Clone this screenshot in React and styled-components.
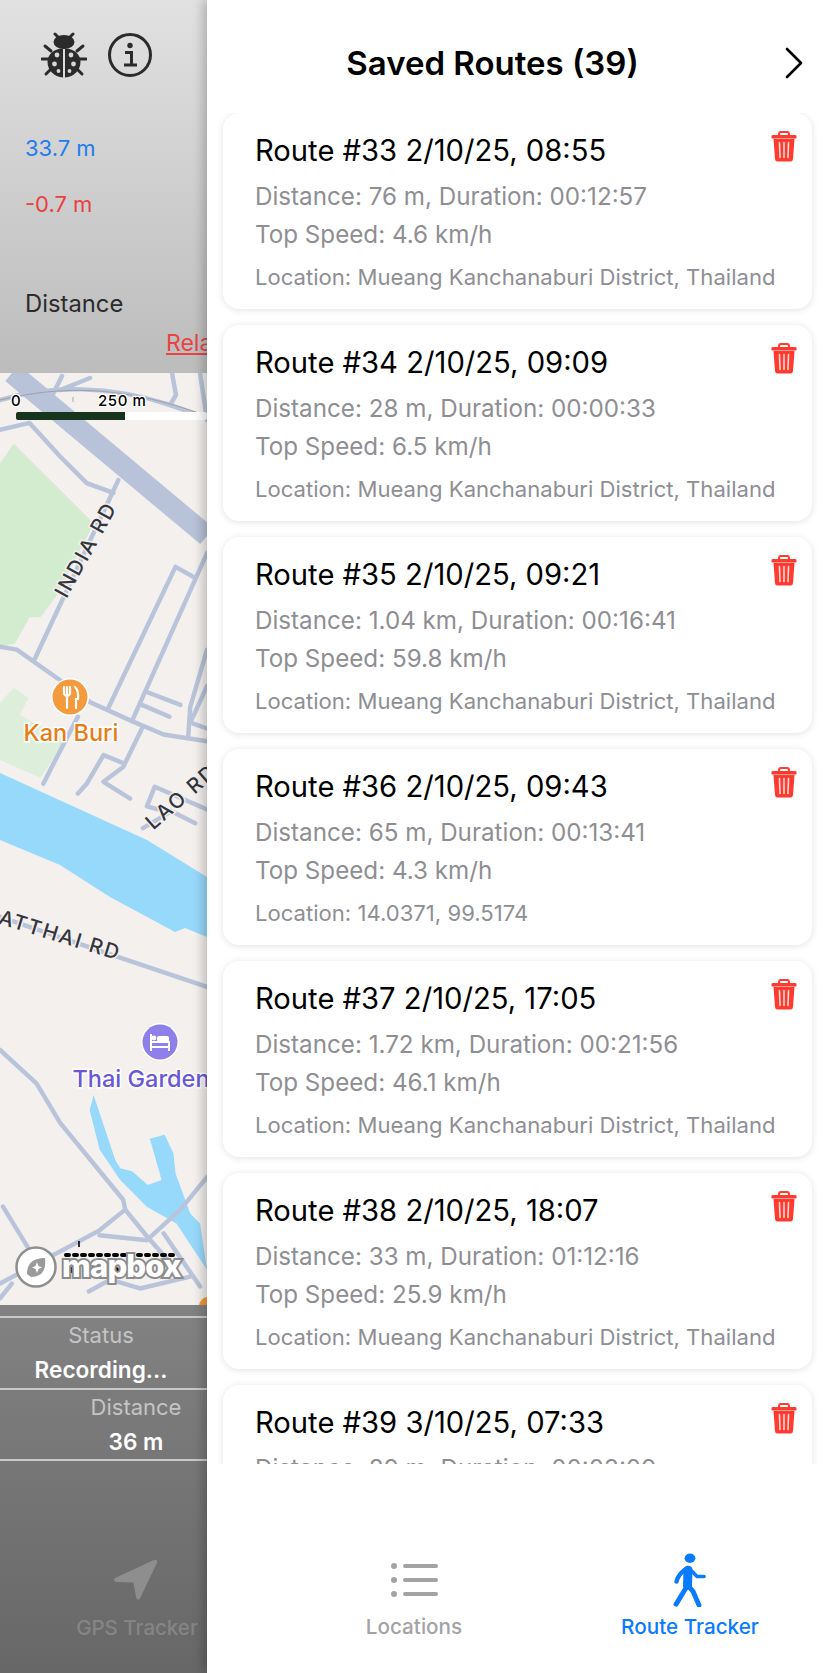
import styled, { createGlobalStyle } from "styled-components";

const GlobalStyle = createGlobalStyle`
    html, body {
        margin: 0;
        padding: 0;
        background: #fff;
        font-family: Inter, "Liberation Sans", sans-serif;
    }
    * {
        box-sizing: border-box;
    }
`;

const routes = [
    { id: 33, date: "2/10/25, 08:55", distance: "76 m", duration: "00:12:57", speed: "4.6 km/h", location: "Mueang Kanchanaburi District, Thailand" },
    { id: 34, date: "2/10/25, 09:09", distance: "28 m", duration: "00:00:33", speed: "6.5 km/h", location: "Mueang Kanchanaburi District, Thailand" },
    { id: 35, date: "2/10/25, 09:21", distance: "1.04 km", duration: "00:16:41", speed: "59.8 km/h", location: "Mueang Kanchanaburi District, Thailand" },
    { id: 36, date: "2/10/25, 09:43", distance: "65 m", duration: "00:13:41", speed: "4.3 km/h", location: "14.0371, 99.5174" },
    { id: 37, date: "2/10/25, 17:05", distance: "1.72 km", duration: "00:21:56", speed: "46.1 km/h", location: "Mueang Kanchanaburi District, Thailand" },
    { id: 38, date: "2/10/25, 18:07", distance: "33 m", duration: "01:12:16", speed: "25.9 km/h", location: "Mueang Kanchanaburi District, Thailand" },
    { id: 39, date: "3/10/25, 07:33", distance: "89 m", duration: "00:03:09", speed: "5.1 km/h", location: "Mueang Kanchanaburi District, Thailand" },
];

// road centre lines, grouped by the stretch of the map they cross
const upperRoads = [
    "M60 390 L90 378 M52 396 L62 376",
    "M0 400 C50 385 110 385 170 405 L207 418",
    "M172 373 L176 395 L170 405 M200 373 L207 420",
];

const middleRoads = [
    "M0 430 L30 423 L61 457 L88 484 L115 494",
    "M120 481 L35 663",
    "M0 650 L17 653 L61 684 L91 706 L135 726 L166 739 L210 746",
    "M110 712 L178 569 L196 579",
    "M135 723 L210 555",
    "M149 696 L183 709",
    "M144 709 L172 721",
    "M144 733 L125 772 L105 787 L132 804",
    "M79 799 L88 789 L105 760 L125 768",
    "M44 789 L51 775 L79 721",
    "M191 740 L193 711 L210 653",
    "M194 725 L210 690",
    "M196 728 L210 733",
    "M145 834 L172 818 L149 812 L157 792 L210 815",
    "M172 816 L198 829",
];

const lowerRoads = [
    "M0 918 L115 957 L210 989",
    "M0 1053 L37 1087 L61 1127 L125 1205 L127 1215 L101 1236 L0 1290",
    "M3 1212 L30 1256",
    "M127 1215 L149 1242 L179 1276",
    "M210 1182 L183 1215 L149 1246 L101 1241",
    "M166 1239 L203 1293",
    "M90 1298 L112 1286 L142 1295 L193 1283",
    "M0 1305 L12 1290",
];

const Bug = () => (
    <svg width="46" height="46" viewBox="0 0 46 46">
        <g stroke="#2b2b2b" strokeWidth="3" strokeLinecap="round" fill="none">
            <path d="M14 2 L18 6 M32 2 L28 6" />
            <path d="M1 27 L9 27 M45 27 L37 27" />
            <path d="M4 14 L10 19 M42 14 L36 19" />
            <path d="M5 42 L11 36 M41 42 L35 36" />
        </g>
        <ellipse cx="23" cy="10" rx="10.5" ry="7" fill="#2b2b2b" />
        <path d="M22 16.5 C12 16.5 6.5 23 6.5 30 C6.5 38 13 45 22 45.5 Z" fill="#2b2b2b" />
        <path d="M24 16.5 C34 16.5 39.5 23 39.5 30 C39.5 38 33 45 24 45.5 Z" fill="#2b2b2b" />
        <g fill="#d8d8d8">
            <circle cx="16" cy="23" r="2.4" />
            <circle cx="30" cy="23" r="2.4" />
            <circle cx="13.5" cy="32" r="2.4" />
            <circle cx="32.5" cy="32" r="2.4" />
            <circle cx="17.5" cy="39" r="1.9" />
            <circle cx="28.5" cy="39" r="1.9" />
        </g>
    </svg>
);

const Info = () => (
    <svg width="46" height="46" viewBox="0 0 46 46">
        <circle cx="23" cy="23" r="20.5" fill="none" stroke="#2b2b2b" strokeWidth="3" />
        <circle cx="23" cy="13.5" r="2.7" fill="#2b2b2b" />
        <path d="M18 20.5 H24.5 V32 M17 33 H30" fill="none" stroke="#2b2b2b" strokeWidth="3" />
    </svg>
);

const Trash = () => (
    <svg width="26" height="31" viewBox="0 0 26 31">
        <path d="M8 4.5 V3 Q8 1 10 1 H16 Q18 1 18 3 V4.5" fill="none" stroke="#ff3b30" strokeWidth="2" />
        <path d="M0.5 5 Q0.5 4 2 4 H24 Q25.5 4 25.5 5 L25.5 7.5 H0.5 Z" fill="#ff3b30" />
        <path d="M2.5 8 H23.5 L22 28 Q21.8 30.5 19.5 30.5 H6.5 Q4.2 30.5 4 28 Z" fill="#ff3b30" />
        <path d="M8.5 11.5 L9 26.5 M13 11.5 V26.5 M17.5 11.5 L17 26.5" stroke="#ffd9d6" strokeWidth="1.6" strokeLinecap="round" />
    </svg>
);

const Walker = () => (
    <svg width="34" height="54" viewBox="0 0 34 62" preserveAspectRatio="none">
        <circle cx="17" cy="6" r="5.4" fill="#0a7aff" />
        <g fill="none" stroke="#0a7aff" strokeLinecap="round" strokeLinejoin="round">
            <path d="M15 19 L14.5 38" strokeWidth="9" />
            <path d="M12 19 Q5 25 3.5 33" strokeWidth="4.4" />
            <path d="M19 21 L24 27 H31" strokeWidth="3.8" />
            <path d="M14 36 L20 44 L26 60" strokeWidth="5" />
            <path d="M12 42 L3 59" strokeWidth="5" />
        </g>
    </svg>
);

const ListGlyph = () => (
    <svg width="47" height="34" viewBox="0 0 47 34">
        <g fill="#a3a3a5">
            <circle cx="3" cy="3" r="3" />
            <circle cx="3" cy="17" r="3" />
            <circle cx="3" cy="31" r="3" />
            <rect x="12" y="1" width="35" height="4" rx="2" />
            <rect x="12" y="15" width="35" height="4" rx="2" />
            <rect x="12" y="29" width="35" height="4" rx="2" />
        </g>
    </svg>
);

const MapDrawing = () => (
    <svg width="207" height="932" viewBox="0 373 207 932">
        <rect x="0" y="373" width="207" height="932" fill="#f3f0ee" />
        <g transform="translate(0 420) scale(0.9857) translate(0 -420)">
            <path d="M0 464 L14 444 L95 525 L59 596 L41 620 L30 620 L15 647 L0 650 Z" fill="#d3ecd0" />
            <path d="M0 707 L14 692 L29 702 L20 719 L66 745 L41 783 L0 765 Z" fill="#ddefdb" />
        </g>
        <path d="M0 773 L147 840 L207 877 L207 937 L185 928 L175 932 L110 897 L60 865 L0 840 Z" fill="#97d9fb" />
        <g transform="translate(0 840) scale(0.9857) translate(0 -840)">
            <path d="M95 1099 L117 1165 L122 1173 L134 1176 L150 1190 L164 1185 L152 1143 L167 1139 L176 1158 L178 1178 L193 1219 L203 1229 L210 1276 L179 1229 L149 1212 L122 1185 L101 1154 L91 1114 Z" fill="#97d9fb" />
        </g>
        <path d="M12 373 L207 536" stroke="#b8c2d8" strokeWidth="21" fill="none" />
        <g fill="none" stroke="#b9c3d9" strokeWidth="4.5" strokeLinecap="round" strokeLinejoin="round">
            {upperRoads.map((d) => (
                <path key={d} d={d} />
            ))}
            <g transform="translate(0 420) scale(0.9857) translate(0 -420)">
                {middleRoads.map((d) => (
                    <path key={d} d={d} />
                ))}
            </g>
            <g transform="translate(0 840) scale(0.9857) translate(0 -840)">
                {lowerRoads.map((d) => (
                    <path key={d} d={d} />
                ))}
            </g>
        </g>
        <circle cx="208" cy="1306" r="9" fill="#f39a3d" />

        <g fontFamily="Inter, sans-serif" fontWeight="500" fontSize="20.5" fill="#33363d" stroke="#f3f0ee" strokeWidth="3" paintOrder="stroke" letterSpacing="2">
            <text x="92" y="553" textAnchor="middle" transform="rotate(-61 92 553)">INDIA RD</text>
            <text x="186" y="802" textAnchor="middle" transform="rotate(-41 186 802)">LAO RD</text>
            <text x="58" y="942" textAnchor="middle" transform="rotate(17 58 942)">ATTHAI RD</text>
        </g>

        <circle cx="70" cy="697" r="19" fill="#fff" />
        <circle cx="70" cy="697" r="17.5" fill="#f39a3d" />
        <path d="M64 687 V694 M67 687 V694 M70 687 V694 M64 694 Q67 698 70 694 M67 696 V708 M75 687 Q79 691 78 699 L76 699 V708" fill="none" stroke="#fff" strokeWidth="2.2" strokeLinecap="round" />
        <text x="71" y="741" textAnchor="middle" fontFamily="Inter, sans-serif" fontWeight="500" fontSize="23.5" fill="#e77d16" stroke="#fff" strokeWidth="3" paintOrder="stroke">Kan Buri</text>

        <circle cx="160" cy="1042" r="19" fill="#fff" />
        <circle cx="160" cy="1042" r="17.5" fill="#8f7fe8" />
        <path d="M151 1034 V1051 M169 1051 V1042 H151 M151 1047 H169" fill="none" stroke="#fff" strokeWidth="2" />
        <rect x="157" y="1036" width="12" height="6" rx="2" fill="#fff" />
        <circle cx="154" cy="1038" r="2.4" fill="#fff" />
        <text x="72.5" y="1087" fontFamily="Inter, sans-serif" fontWeight="500" fontSize="23.5" fill="#6a58d8" stroke="#fff" strokeWidth="3" paintOrder="stroke">Thai Garden</text>

        <g stroke="#000" strokeLinecap="round" fill="none">
            <path d="M66 1255 H178" strokeWidth="4" strokeDasharray="3 5" />
            <path d="M70 1270 H174" strokeWidth="6" strokeDasharray="1 14" />
        </g>
        <path d="M79 1241 V1247" stroke="#000" strokeWidth="1.6" />

        <circle cx="36" cy="1267" r="19.5" fill="#fff" stroke="#8f8f8f" strokeWidth="2.5" />
        <path d="M27 1274 Q27 1258 45 1258 Q47 1277 31 1277 Z" fill="#9a9a9a" />
        <path d="M37 1262 L38.5 1266 L42 1267.5 L38.5 1269 L37 1273 L35.5 1269 L32 1267.5 L35.5 1266 Z" fill="#fff" />
        <text x="62" y="1277" fontFamily="Inter, 'Liberation Sans', sans-serif" fontWeight="800" fontSize="31" letterSpacing="-0.8" fill="#fff" stroke="#8c8c8c" strokeWidth="4" paintOrder="stroke">mapbox</text>

        <path d="M0 400 C60 386 120 384 207 416" fill="none" stroke="#999" strokeWidth="0.8" />
        <path d="M73 397 V402" stroke="#999" strokeWidth="0.8" />
        <rect x="16" y="412" width="191" height="8" rx="2" fill="#fff" />
        <path d="M18 412 H125 V420 H18 Q16 420 16 418 V414 Q16 412 18 412 Z" fill="#17351c" />
        <g fontFamily="Inter, sans-serif" fontWeight="500" fontSize="15" fill="#000" stroke="#fff" strokeWidth="2.5" paintOrder="stroke" letterSpacing="0.6">
            <text x="11" y="406">0</text>
            <text x="98" y="406">250 m</text>
        </g>
    </svg>
);

export default function App() {
    return (
        <>
            <GlobalStyle />
            <SPage>
                <SLeftPane>
                    <STopPanel>
                        <SIconRow>
                            <Bug />
                            <Info />
                        </SIconRow>
                        <SValue $color="#1f7cf0" $top="58px">33.7 m</SValue>
                        <SValue $color="#ea4040" $top="32px">-0.7 m</SValue>
                        <SDistance>Distance</SDistance>
                        <SRelated>Relative</SRelated>
                    </STopPanel>
                    <SMapArea>
                        <MapDrawing />
                    </SMapArea>
                    <SBottomPanel>
                        <SStatRow $first>
                            <SStatCell $width="202px">
                                <SStatLabel>Status</SStatLabel>
                                <SStatValue>Recording...</SStatValue>
                            </SStatCell>
                            <SStatDivider />
                        </SStatRow>
                        <SStatRow>
                            <SStatCell $width="272px">
                                <SStatLabel>Distance</SStatLabel>
                                <SStatValue>36 m</SStatValue>
                            </SStatCell>
                        </SStatRow>
                        <SGpsTab>
                            <SGpsIcon width="48" height="46" viewBox="0 0 46 46" preserveAspectRatio="none">
                                <path d="M4 22 L41 4 Q45 2.5 44 7 L28 42 Q25.5 46 24 41 L21.5 26.5 L5 26 Q1 24.5 4 22 Z" fill="#8e8e8e" />
                            </SGpsIcon>
                            <SGpsLabel>GPS Tracker</SGpsLabel>
                        </SGpsTab>
                    </SBottomPanel>
                </SLeftPane>
                <SDrawer>
                    <SDrawerHeader>
                        <STitle>Saved Routes (39)</STitle>
                        <SCloseIcon width="20" height="32" viewBox="0 0 20 32">
                            <path d="M3 2 L17 16 L3 30" fill="none" stroke="#000" strokeWidth="2.6" strokeLinecap="round" strokeLinejoin="round" />
                        </SCloseIcon>
                    </SDrawerHeader>
                    <SRouteList>
                        {routes.map((route) => (
                            <SCard key={route.id}>
                                <SCardBody>
                                    <SRouteTitle>Route #{route.id} {route.date}</SRouteTitle>
                                    <SDetail>Distance: {route.distance}, Duration: {route.duration}</SDetail>
                                    <SDetail>Top Speed: {route.speed}</SDetail>
                                    <SLocation>Location: {route.location}</SLocation>
                                </SCardBody>
                                <STrashButton>
                                    <Trash />
                                </STrashButton>
                            </SCard>
                        ))}
                    </SRouteList>
                    <STabBar>
                        <STab>
                            <STabIcon><ListGlyph /></STabIcon>
                            <STabLabel $active={false}>Locations</STabLabel>
                        </STab>
                        <STab>
                            <STabIcon><Walker /></STabIcon>
                            <STabLabel $active>Route Tracker</STabLabel>
                        </STab>
                    </STabBar>
                </SDrawer>
            </SPage>
        </>
    );
}

const SPage = styled.div`
    width: 828px;
    height: 1673px;
    display: flex;
    overflow: hidden;
`;

const SLeftPane = styled.div`
    width: 207px;
    flex-shrink: 0;
    display: flex;
    flex-direction: column;
    overflow: hidden;
`;

const STopPanel = styled.div`
    height: 373px;
    padding: 32px 0 0 25px;
    display: flex;
    flex-direction: column;
    align-items: flex-start;
    background: linear-gradient(#e1e1e1, #bcbcbc);
`;

const SIconRow = styled.div`
    display: flex;
    gap: 20px;
    margin-left: 16px;
`;

const SValue = styled.div`
    margin-top: ${(props) => props.$top};
    font-size: 22px;
    line-height: 24px;
    color: ${(props) => props.$color};
`;

const SDistance = styled.div`
    margin-top: 74px;
    font-size: 23.8px;
    line-height: 28px;
    color: #2c2c2c;
`;

const SRelated = styled.div`
    margin: 11px 0 0 141px;
    font-size: 23px;
    line-height: 28px;
    color: #e94343;
    white-space: nowrap;
    text-decoration: underline;
`;

const SMapArea = styled.div`
    height: 932px;
    line-height: 0;
    overflow: hidden;
`;

const SBottomPanel = styled.div`
    flex: 1;
    padding-top: 11px;
    background: linear-gradient(#828282, #676767);
`;

const SStatRow = styled.div`
    height: 72px;
    display: flex;
    align-items: center;
    border-top: 2px solid #c9c9c9;
    ${(props) => props.$first ? "" : "border-bottom: 2px solid #c9c9c9; height: 73px;"}
`;

const SStatCell = styled.div`
    width: ${(props) => props.$width};
    flex-shrink: 0;
    padding-top: 6px;
    text-align: center;
`;

const SStatDivider = styled.div`
    width: 2px;
    height: 50px;
    background: #a8a8a8;
    flex-shrink: 0;
    margin-left: 5px;
`;

const SStatLabel = styled.div`
    font-size: 22px;
    line-height: 28px;
    color: #c4c4c4;
`;

const SStatValue = styled.div`
    font-size: 22.6px;
    font-weight: 600;
    line-height: 42px;
    color: #fff;
    white-space: nowrap;
`;

const SGpsTab = styled.div`
    width: 274px;
    margin-top: 95px;
    display: flex;
    flex-direction: column;
    align-items: center;
`;

const SGpsIcon = styled.svg`
    margin-right: 4px;
`;

const SGpsLabel = styled.div`
    margin-top: 13px;
    font-size: 20.5px;
    font-weight: 500;
    line-height: 26px;
    color: #858585;
    white-space: nowrap;
`;

const SDrawer = styled.div`
    flex: 1;
    min-width: 0;
    display: flex;
    flex-direction: column;
    background: #fff;
    box-shadow: -4px 0 10px rgba(0, 0, 0, 0.22);
    position: relative;
`;

const SDrawerHeader = styled.div`
    height: 113px;
    flex-shrink: 0;
    padding: 12px 50px 0 0;
    display: flex;
    align-items: center;
    justify-content: center;
    position: relative;
`;

const STitle = styled.div`
    font-size: 33px;
    font-weight: 600;
    color: #000;
    white-space: nowrap;
`;

const SCloseIcon = styled.svg`
    position: absolute;
    right: 24px;
    top: 47px;
`;

const SRouteList = styled.div`
    height: 1351px;
    flex-shrink: 0;
    padding: 0 16px;
    display: flex;
    flex-direction: column;
    gap: 16px;
    overflow: hidden;
`;

const SCard = styled.div`
    height: 196px;
    flex-shrink: 0;
    padding: 18px 15px 0 32px;
    display: flex;
    justify-content: space-between;
    background: #fff;
    border-radius: 16px;
    box-shadow: 0 1px 7px rgba(0, 0, 0, 0.12);
`;

const SCardBody = styled.div`
    display: flex;
    flex-direction: column;
    align-items: flex-start;
    min-width: 0;
`;

const SRouteTitle = styled.div`
    font-size: 29.2px;
    line-height: 40px;
    color: #000;
    white-space: nowrap;
`;

const SDetail = styled.div`
    font-size: 24.2px;
    line-height: 38px;
    color: #8e8e93;
    white-space: nowrap;
    &:nth-child(2) {
        margin-top: 7px;
    }
`;

const SLocation = styled.div`
    margin-top: 7px;
    font-size: 22.1px;
    line-height: 32px;
    color: #8e8e93;
    white-space: nowrap;
`;

const STrashButton = styled.div`
    line-height: 0;
    margin-top: 0;
`;

const STabBar = styled.div`
    flex: 1;
    margin-left: 69px;
    display: grid;
    grid-template-columns: 276px 276px;
`;

const STab = styled.div`
    padding-top: 89px;
    display: flex;
    flex-direction: column;
    align-items: center;
`;

const STabIcon = styled.div`
    height: 54px;
    display: flex;
    align-items: center;
    line-height: 0;
`;

const STabLabel = styled.div`
    margin-top: 7px;
    font-size: 20.7px;
    font-weight: 500;
    line-height: 26px;
    color: ${(props) => props.$active ? "#0a7aff" : "#a3a3a5"};
    white-space: nowrap;
`;
